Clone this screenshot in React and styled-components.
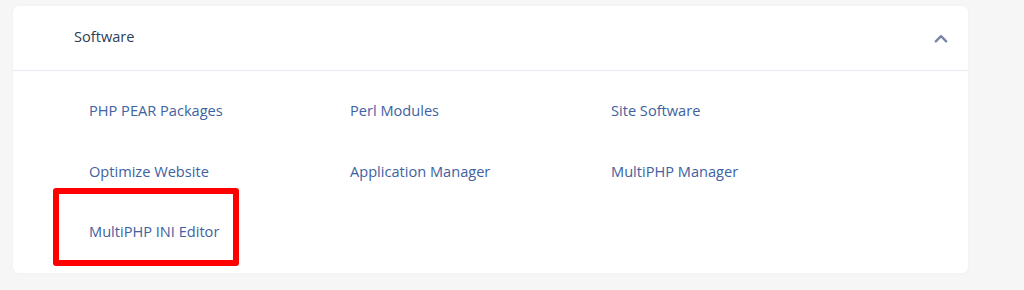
import styled, { createGlobalStyle } from 'styled-components'

const GlobalStyle = createGlobalStyle`
  body {
    margin: 0;
    background: #f6f6f6;
    font-family: 'Open Sans', 'Noto Sans', sans-serif;
  }
`

const Page = styled.div`
  padding: 6px 0 0 13px;
  height: 290px;
  box-sizing: border-box;
`

const Card = styled.section`
  width: 955px;
  height: 267px;
  background: #ffffff;
  border-radius: 6px;
  box-shadow: 0 0 3px rgba(0, 0, 0, 0.04);
`

const Header = styled.div`
  display: flex;
  align-items: center;
  justify-content: space-between;
  height: 65px;
  padding: 0 20px 0 61px;
  border-bottom: 1px solid #e7eaf0;
  box-sizing: border-box;
`

const Title = styled.h2`
  margin: 0;
  font-size: 14.6px;
  font-weight: 400;
  color: #2c3e55;
  line-height: 20px;
  padding-bottom: 4px;
`

const Toggle = styled.span`
  display: flex;
  color: #7886a5;
  padding-top: 1px;
`

const Grid = styled.ul`
  list-style: none;
  margin: 0;
  padding: 9px 0 0 76px;
  display: grid;
  grid-template-columns: repeat(3, 261px);
  grid-auto-rows: 60.5px;
`

const Item = styled.li`
  position: relative;
  display: flex;
  align-items: center;
`

const ItemLink = styled.a`
  font-size: 14.6px;
  line-height: 20px;
  color: #4062a0;
  text-decoration: none;
`

const Highlight = styled.span`
  position: absolute;
  left: -36px;
  top: -13px;
  width: 186px;
  height: 78px;
  border: 6px solid #ff0000;
  border-radius: 3px;
  box-sizing: border-box;
  pointer-events: none;
`

const items = [
  'PHP PEAR Packages',
  'Perl Modules',
  'Site Software',
  'Optimize Website',
  'Application Manager',
  'MultiPHP Manager',
  'MultiPHP INI Editor',
]

const Chevron = () => (
  <svg width='14' height='9' viewBox='0 0 14 9' fill='none'>
    <path
      d='M1.8 7.3 L7 2.2 L12.2 7.3'
      stroke='currentColor'
      strokeWidth='2.4'
      strokeLinecap='round'
      strokeLinejoin='round'
    />
  </svg>
)

const App = () => {
  return (
    <>
      <GlobalStyle />
      <Page>
        <Card>
          <Header>
            <Title>Software</Title>
            <Toggle>
              <Chevron />
            </Toggle>
          </Header>
          <Grid>
            {items.map((name) => (
              <Item key={name}>
                <ItemLink href='#'>{name}</ItemLink>
                {name === 'MultiPHP INI Editor' && <Highlight />}
              </Item>
            ))}
          </Grid>
        </Card>
      </Page>
    </>
  )
}

export default App
